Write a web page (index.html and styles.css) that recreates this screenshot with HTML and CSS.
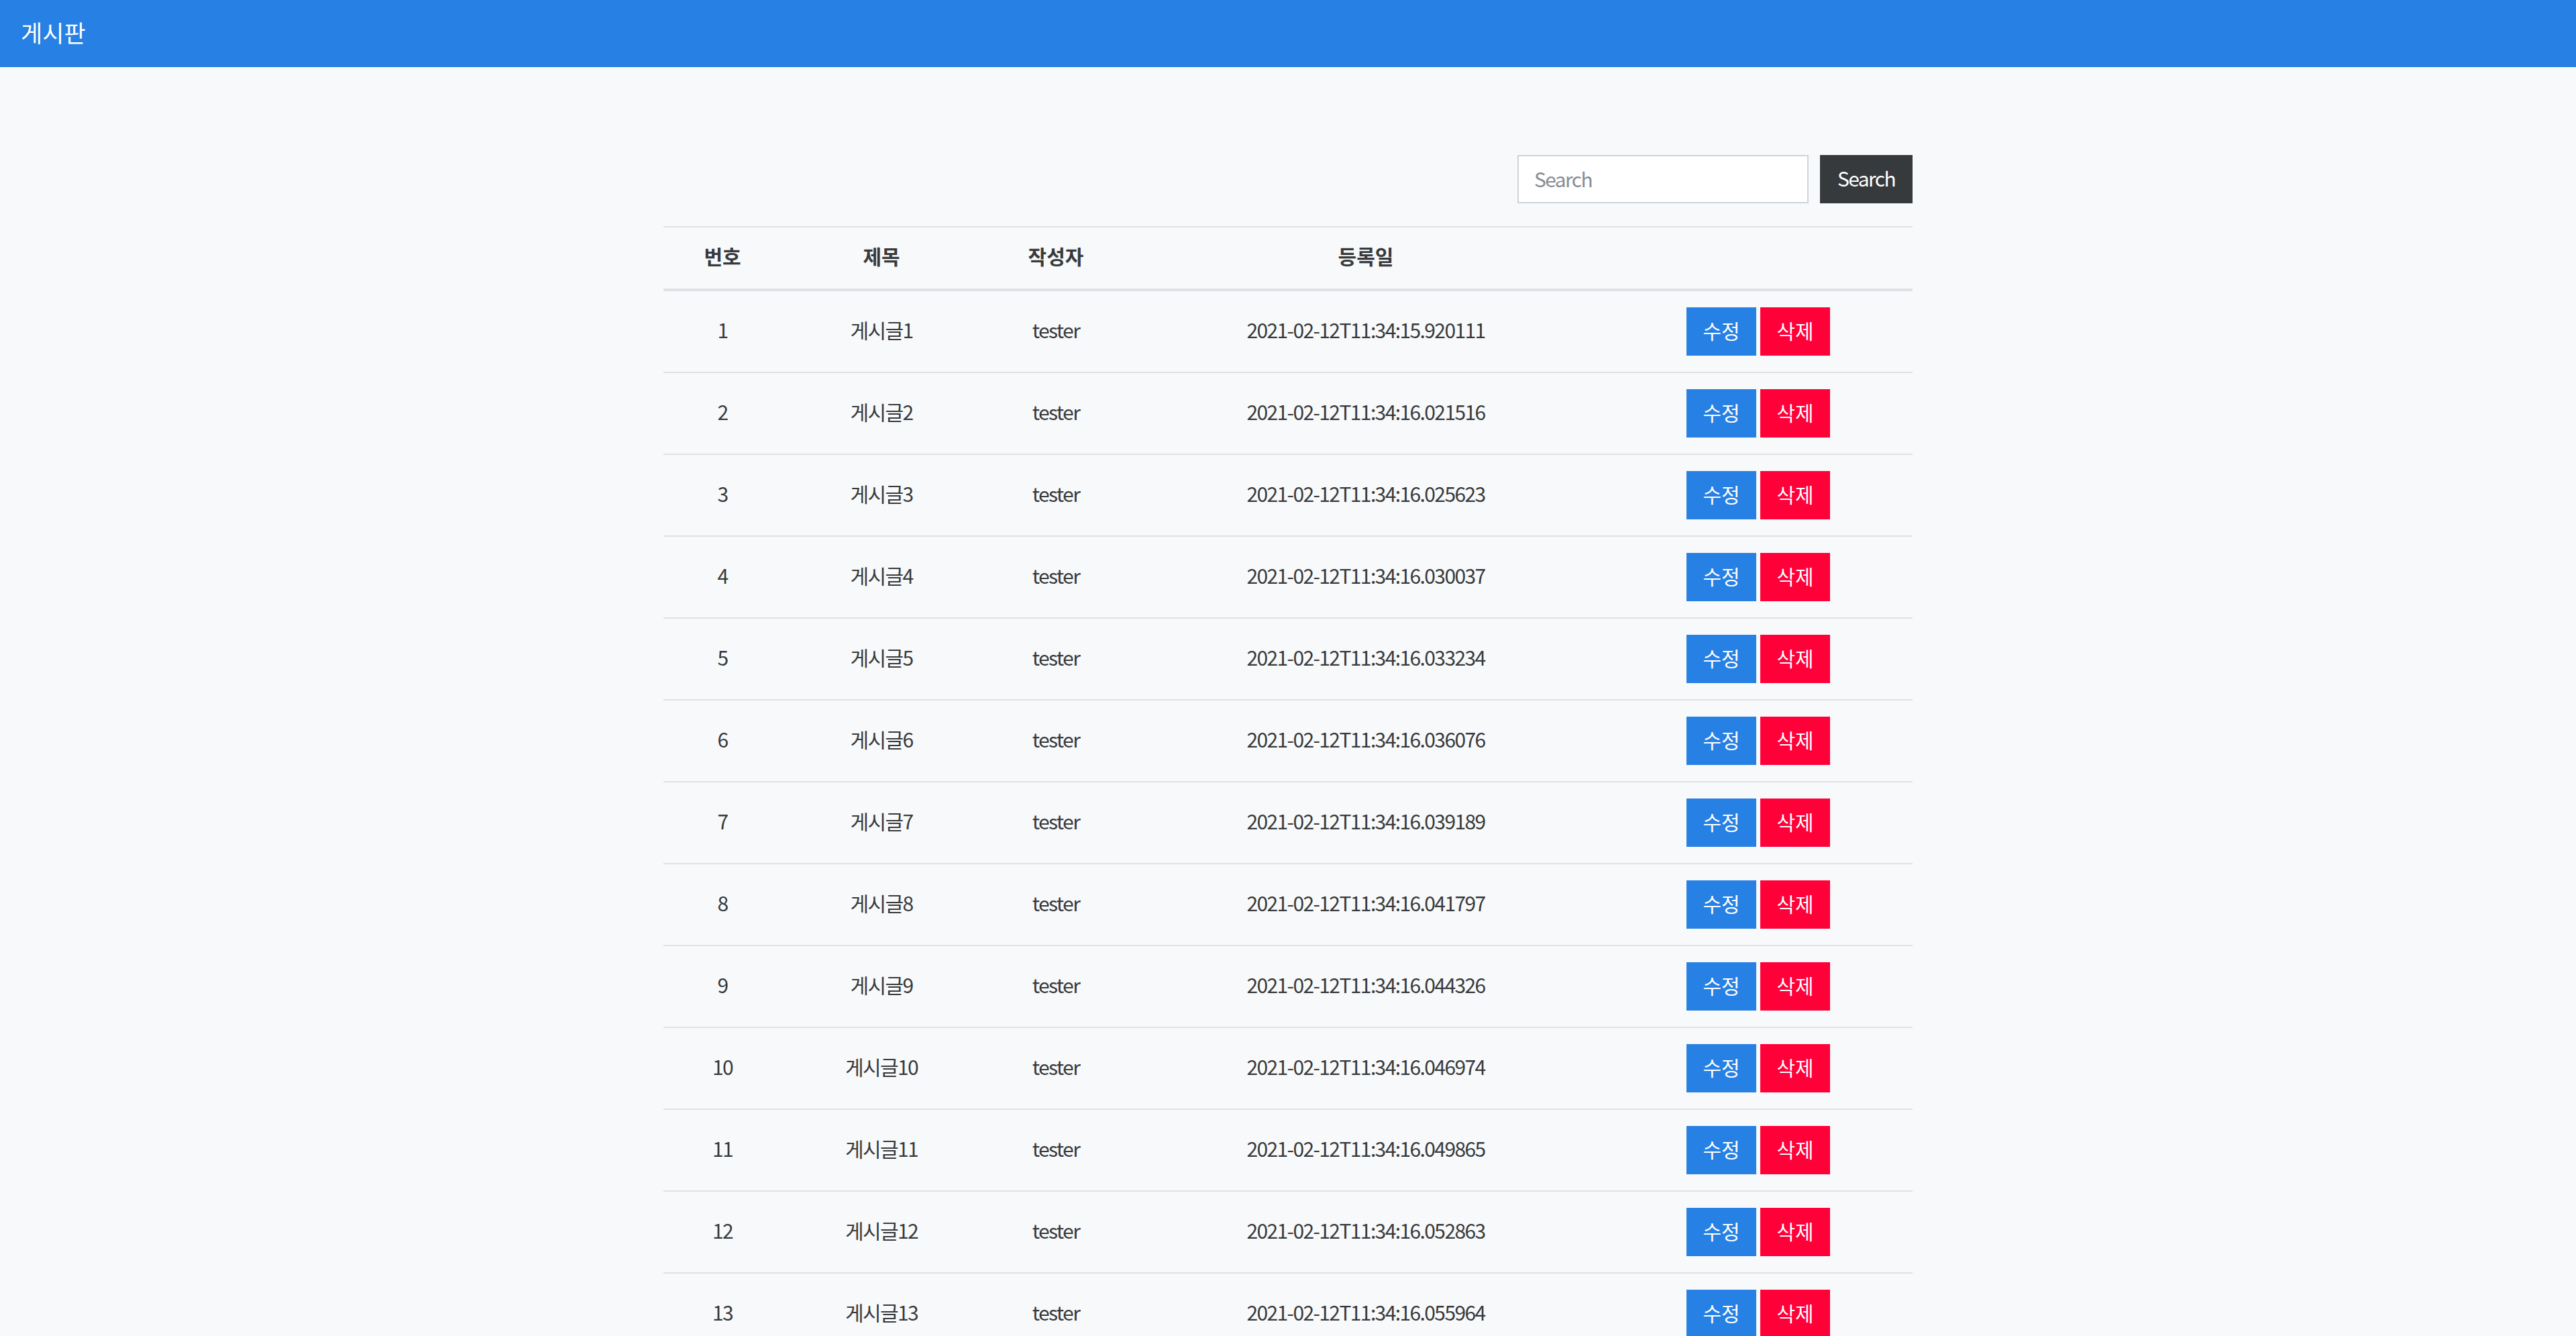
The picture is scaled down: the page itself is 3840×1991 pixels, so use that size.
FILE: index.html
```html
<!DOCTYPE html>
<html>
<head>
<meta charset="utf-8">
<title>게시판</title>
<link rel="stylesheet" href="styles.css">
</head>
<body>
<nav class="navbar"><span class="brand">게시판</span></nav>
<main class="container">
  <form class="search">
    <input class="search-input" type="text" placeholder="Search">
    <button class="search-btn" type="button">Search</button>
  </form>
  <table class="board">
    <colgroup>
      <col class="c-no"><col class="c-title"><col class="c-author"><col class="c-date"><col class="c-actions">
    </colgroup>
    <thead>
      <tr><th>번호</th><th>제목</th><th>작성자</th><th>등록일</th><th></th></tr>
    </thead>
    <tbody>
      <tr><td>1</td><td>게시글1</td><td>tester</td><td class="date">2021-02-12T11:34:15.920111</td><td class="act"><div class="actions"><button class="btn btn-edit">수정</button><button class="btn btn-del">삭제</button></div></td></tr>
      <tr><td>2</td><td>게시글2</td><td>tester</td><td class="date">2021-02-12T11:34:16.021516</td><td class="act"><div class="actions"><button class="btn btn-edit">수정</button><button class="btn btn-del">삭제</button></div></td></tr>
      <tr><td>3</td><td>게시글3</td><td>tester</td><td class="date">2021-02-12T11:34:16.025623</td><td class="act"><div class="actions"><button class="btn btn-edit">수정</button><button class="btn btn-del">삭제</button></div></td></tr>
      <tr><td>4</td><td>게시글4</td><td>tester</td><td class="date">2021-02-12T11:34:16.030037</td><td class="act"><div class="actions"><button class="btn btn-edit">수정</button><button class="btn btn-del">삭제</button></div></td></tr>
      <tr><td>5</td><td>게시글5</td><td>tester</td><td class="date">2021-02-12T11:34:16.033234</td><td class="act"><div class="actions"><button class="btn btn-edit">수정</button><button class="btn btn-del">삭제</button></div></td></tr>
      <tr><td>6</td><td>게시글6</td><td>tester</td><td class="date">2021-02-12T11:34:16.036076</td><td class="act"><div class="actions"><button class="btn btn-edit">수정</button><button class="btn btn-del">삭제</button></div></td></tr>
      <tr><td>7</td><td>게시글7</td><td>tester</td><td class="date">2021-02-12T11:34:16.039189</td><td class="act"><div class="actions"><button class="btn btn-edit">수정</button><button class="btn btn-del">삭제</button></div></td></tr>
      <tr><td>8</td><td>게시글8</td><td>tester</td><td class="date">2021-02-12T11:34:16.041797</td><td class="act"><div class="actions"><button class="btn btn-edit">수정</button><button class="btn btn-del">삭제</button></div></td></tr>
      <tr><td>9</td><td>게시글9</td><td>tester</td><td class="date">2021-02-12T11:34:16.044326</td><td class="act"><div class="actions"><button class="btn btn-edit">수정</button><button class="btn btn-del">삭제</button></div></td></tr>
      <tr><td>10</td><td>게시글10</td><td>tester</td><td class="date">2021-02-12T11:34:16.046974</td><td class="act"><div class="actions"><button class="btn btn-edit">수정</button><button class="btn btn-del">삭제</button></div></td></tr>
      <tr><td>11</td><td>게시글11</td><td>tester</td><td class="date">2021-02-12T11:34:16.049865</td><td class="act"><div class="actions"><button class="btn btn-edit">수정</button><button class="btn btn-del">삭제</button></div></td></tr>
      <tr><td>12</td><td>게시글12</td><td>tester</td><td class="date">2021-02-12T11:34:16.052863</td><td class="act"><div class="actions"><button class="btn btn-edit">수정</button><button class="btn btn-del">삭제</button></div></td></tr>
      <tr><td>13</td><td>게시글13</td><td>tester</td><td class="date">2021-02-12T11:34:16.055964</td><td class="act"><div class="actions"><button class="btn btn-edit">수정</button><button class="btn btn-del">삭제</button></div></td></tr>
    </tbody>
  </table>
</main>
</body>
</html>
```
FILE: styles.css
```css
* { box-sizing: border-box; }

body {
  margin: 0;
  background: #f8f9fa;
  font-family: "Noto Sans CJK KR", "Noto Sans", sans-serif;
  font-size: 30px;
  line-height: 45px;
  color: #373a3c;
}

.navbar {
  height: 100px;
  background: #2780e3;
  display: flex;
  align-items: center;
  padding: 0 31px;
}

.brand {
  color: #fff;
  font-size: 35px;
  line-height: 1;
  margin-top: -6px;
}

.container {
  width: 1862px;
  margin: 0 auto;
  padding-top: 131px;
}

.search {
  display: flex;
  justify-content: flex-end;
  gap: 17px;
  margin: 0 0 34px;
}

.search-input {
  width: 434px;
  height: 72px;
  border: 2px solid #ced4da;
  background: #fff;
  padding: 0 23px 3px;
  font: inherit;
  letter-spacing: -1.6px;
  color: #373a3c;
  outline: none;
}

.search-input::placeholder { color: #868e96; }

.search-btn {
  width: 138px;
  height: 72px;
  border: 0;
  background: #373a3c;
  color: #fff;
  font: inherit;
  letter-spacing: -1.6px;
  padding: 0 0 3px;
}

.board {
  width: 100%;
  table-layout: fixed;
  border-spacing: 0;
}

.c-no { width: 176px; }
.c-title { width: 298px; }
.c-author { width: 222px; }
.c-date { width: 702px; }
.c-actions { width: 464px; }

.board th,
.board td {
  text-align: center;
  vertical-align: middle;
  padding: 21px 0 27px;
  border-bottom: 2px solid #dee2e6;
  font-weight: 400;
}

.board td { letter-spacing: -1.6px; }

.board td.act { padding: 24px 0 24px 4px; letter-spacing: 0; }

.board thead th {
  font-weight: 700;
  padding: 20px 0 26px;
  border-top: 2px solid #dee2e6;
  border-bottom: 4px solid #dee2e6;
}

.actions {
  display: flex;
  justify-content: center;
  gap: 6px;
}

.btn {
  height: 72px;
  width: 104px;
  padding: 0 0 3px;
  border: 0;
  font: inherit;
  color: #fff;
}

.btn-edit { background: #2780e3; }
.btn-del { background: #ff0039; }
```
